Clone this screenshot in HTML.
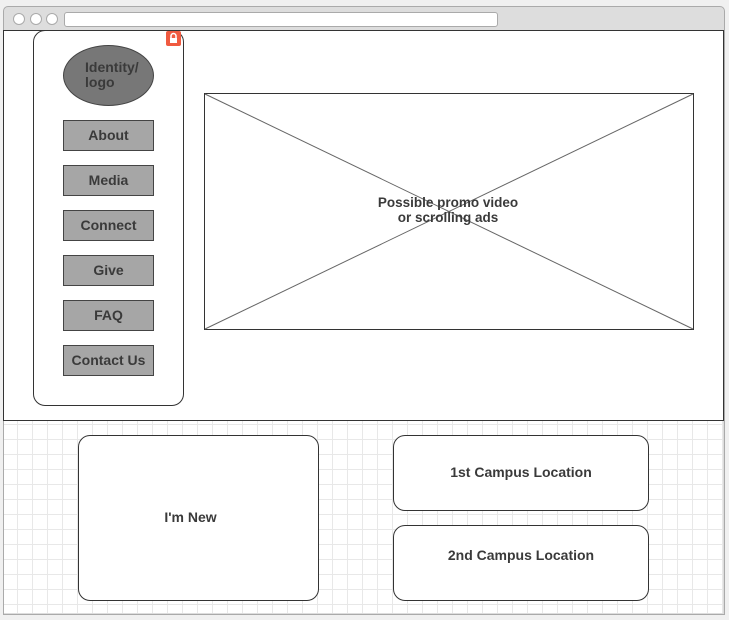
<!DOCTYPE html>
<html><head><style>
*{margin:0;padding:0;box-sizing:border-box}
body{width:729px;height:620px;background:#f0f0f0;position:relative;overflow:hidden;font-family:"Liberation Sans",Arial,sans-serif;font-weight:bold;color:#3a3a3a}
.abs{position:absolute}
.frame{left:3px;top:6px;width:722px;height:609px;background:#ddd;border:1px solid #aaa;border-radius:5px 5px 0 0}
.dot{width:12px;height:12px;border-radius:50%;background:#fff;border:1px solid #aaa;top:13px}
.url{left:64px;top:12px;width:434px;height:15px;background:#fff;border:1px solid #aaa;border-radius:3px}
.top{left:3px;top:30px;width:721px;height:391px;background:#fff;border:1px solid #333}
.grid{left:4px;top:421px;width:719px;height:192px;background-color:#fff;background-image:linear-gradient(#e8e8e8 1px,transparent 1px),linear-gradient(90deg,#e8e8e8 1px,transparent 1px);background-size:15px 15px;background-position:13px 3px}
.side{left:33px;top:30px;width:151px;height:376px;border:1px solid #333;border-radius:12px;background:#fff}
.btn{left:63px;width:91px;height:31px;background:#a6a6a6;border:1px solid #444;font-size:14px;text-align:center;line-height:28px}
.logo{left:63px;top:45px;width:91px;height:61px;border-radius:50%;background:#777;border:1px solid #444;font-size:14px;padding:14px 0 0 21px;line-height:15px}
.lock{left:166px;top:31px;width:15px;height:15px;background:#f05a40;border-radius:2px}
.box{background:#fff;border:1px solid #333;border-radius:12px;display:flex;align-items:center;justify-content:center;font-size:14px}
</style></head><body>
<div class="abs frame"></div>
<div class="abs dot" style="left:13px"></div>
<div class="abs dot" style="left:30px"></div>
<div class="abs dot" style="left:46px"></div>
<div class="abs url"></div>
<div class="abs top"></div>
<div class="abs grid"></div>
<div class="abs side"></div>
<div class="abs lock"><svg width="15" height="15"><path d="M5 7V5a2.5 2.5 0 0 1 5 0v2" stroke="#fff" stroke-width="1.5" fill="none"/><rect x="4" y="7" width="7" height="5" fill="#fff"/></svg></div>
<div class="abs logo">Identity/<br>logo</div>
<div class="abs btn" style="top:120px">About</div>
<div class="abs btn" style="top:165px">Media</div>
<div class="abs btn" style="top:210px">Connect</div>
<div class="abs btn" style="top:255px">Give</div>
<div class="abs btn" style="top:300px">FAQ</div>
<div class="abs btn" style="top:345px">Contact Us</div>
<svg class="abs" style="left:204px;top:93px" width="491" height="238"><rect x="0.5" y="0.5" width="489" height="236" fill="#fff" stroke="#333"/><line x1="1" y1="1" x2="489" y2="236" stroke="#666"/><line x1="489" y1="1" x2="1" y2="236" stroke="#666"/></svg>
<div class="abs" style="left:348px;top:195px;width:200px;text-align:center;font-size:13.5px;line-height:15px">Possible promo video<br>or scrolling ads</div>
<div class="abs box" style="left:78px;top:435px;width:241px;height:166px;padding-right:16px;padding-bottom:2px">I'm New</div>
<div class="abs box" style="left:393px;top:435px;width:256px;height:76px;padding-bottom:2px">1st Campus Location</div>
<div class="abs box" style="left:393px;top:525px;width:256px;height:76px;padding-bottom:16px">2nd Campus Location</div>
</body></html>
